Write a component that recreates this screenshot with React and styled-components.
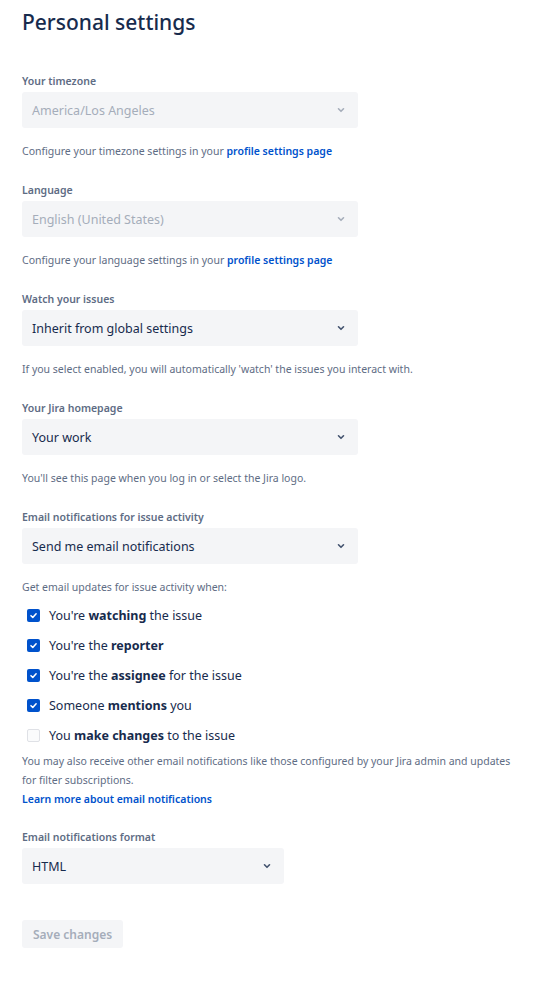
import React from "react";
import styled, { createGlobalStyle } from "styled-components";

const Global = createGlobalStyle`
  body { margin: 0; background: #fff; font-family: "Segoe UI", "Noto Sans", sans-serif; color: #172b4d; }
`;
const Page = styled.div`padding: 8px 22px 40px; width: 496px;`;
const Title = styled.h1`font-size: 21px; font-weight: 500; margin: 0 0 38px; line-height: 28px; color:#172b4d;`;
const Field = styled.div`display:flex; flex-direction:column; margin-bottom: ${p => p.$mb ?? 22}px;`;
const Label = styled.div`font-size: 10.5px; font-weight: 600; color:#5e6c84; line-height:14px; margin-bottom: 4px;`;
const Select = styled.div`
  width: ${p => p.$w || 336}px; height: 36px; box-sizing:border-box; border-radius: 3px;
  background:#f4f5f7; display:flex; align-items:center; justify-content:space-between;
  padding: 0 12px 0 10px; font-size: 12.5px; color: ${p => p.$disabled ? "#a5adba" : "#172b4d"};
`;
const Help = styled.div`font-size: 10.5px; color:#5e6c84; line-height: 19px; margin-top: ${p => p.$mt ?? 14}px;`;
const Link = styled.a`color:#0052cc; font-weight:600; text-decoration:none;`;
const List = styled.div`display:flex; flex-direction:column; margin-top: 3px;`;
const Row = styled.label`display:flex; align-items:center; height:30px; gap: 9px; padding-left: 5px; font-size: 12.5px; color:#172b4d; b{font-weight:700;}`;
const Box = styled.span`
  width: 13px; height: 13px; border-radius: 2px; box-sizing:border-box;
  background: ${p => p.$on ? "#0052cc" : "#fafbfc"}; border: ${p => p.$on ? "none" : "1.5px solid #dfe1e6"};
  display:flex; align-items:center; justify-content:center;
`;
const Button = styled.button`
  margin-top: 36px; height: 28px; padding: 0 11px; border:none; border-radius:3px; background:#f4f5f7;
  color:#a5adba; font-family: inherit; font-size: 12px; font-weight: 600;
`;

const Chevron = ({ c }) => (
  <svg width="10" height="10" viewBox="0 0 10 10"><path d="M2.5 3.8 5 6.3 7.5 3.8" fill="none" stroke={c} strokeWidth="1.6" strokeLinecap="round" strokeLinejoin="round"/></svg>
);
const Check = () => (
  <svg width="9" height="9" viewBox="0 0 10 10"><path d="M2.2 5.2 4.2 7.1 7.9 3" fill="none" stroke="#fff" strokeWidth="1.7" strokeLinecap="round" strokeLinejoin="round"/></svg>
);

const Sel = ({ v, dis, w }) => (
  <Select $disabled={dis} $w={w}>{v}<Chevron c={dis ? "#a5adba" : "#42526e"} /></Select>
);

export default function App() {
  const items = [
    [true, <>You're <b>watching</b> the issue</>],
    [true, <>You're the <b>reporter</b></>],
    [true, <>You're the <b>assignee</b> for the issue</>],
    [true, <>Someone <b>mentions</b> you</>],
    [false, <>You <b>make changes</b> to the issue</>],
  ];
  return (
    <Page>
      <Global />
      <Title>Personal settings</Title>
      <Field><Label>Your timezone</Label><Sel v="America/Los Angeles" dis />
        <Help>Configure your timezone settings in your <Link>profile settings page</Link></Help></Field>
      <Field><Label>Language</Label><Sel v="English (United States)" dis />
        <Help>Configure your language settings in your <Link>profile settings page</Link></Help></Field>
      <Field><Label>Watch your issues</Label><Sel v="Inherit from global settings" />
        <Help>If you select enabled, you will automatically 'watch' the issues you interact with.</Help></Field>
      <Field><Label>Your Jira homepage</Label><Sel v="Your work" />
        <Help>You'll see this page when you log in or select the Jira logo.</Help></Field>
      <Field $mb={21}><Label>Email notifications for issue activity</Label><Sel v="Send me email notifications" />
        <Help>Get email updates for issue activity when:</Help>
        <List>{items.map(([on, t], i) => <Row key={i}><Box $on={on}>{on && <Check />}</Box><span>{t}</span></Row>)}</List>
        <Help $mt={2}>You may also receive other email notifications like those configured by your Jira admin and updates for filter subscriptions.<br /><Link>Learn more about email notifications</Link></Help>
      </Field>
      <Field $mb={0}><Label>Email notifications format</Label><Sel v="HTML" w={262} /></Field>
      <Button>Save changes</Button>
    </Page>
  );
}
